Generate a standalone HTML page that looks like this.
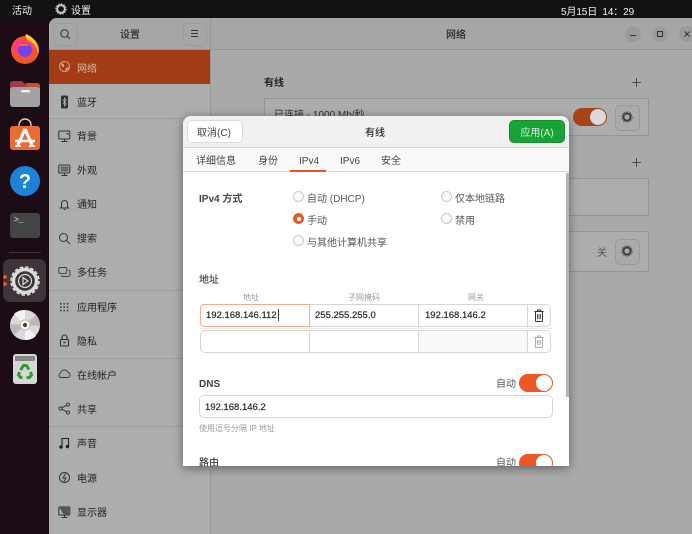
<!DOCTYPE html>
<html lang="zh"><head><meta charset="utf-8"><title>设置</title>
<style>
html,body{margin:0;padding:0;width:692px;height:534px;overflow:hidden;background:#1b0c16}
body{font-family:"Liberation Sans","Noto Sans CJK SC",sans-serif;position:relative;filter:blur(.3px)}
.a,.t,svg{position:absolute}
.t{white-space:nowrap;font-size:10px;line-height:14px;color:#2c2c2c;margin-top:3px}
.b{font-weight:700}
.c{transform:translateX(-50%)}
.g{color:#9c9c9c;font-size:8px;line-height:10px}
.s{color:#222;left:77px}
.n{font-size:9.5px;color:#2a2a2a;-webkit-text-stroke:.2px #2a2a2a}
.ln{position:absolute;background:#9d9d9d;height:1px}
.card{position:absolute;left:264px;width:383px;border:1px solid #959595;background:#adadad}
.gb{position:absolute;left:615px;width:23px;height:24px;border:1px solid #999;border-radius:5px;background:#aaa}
.r{position:absolute;width:9px;height:9px;border:1px solid #c9c9c9;border-radius:50%;background:#fafafa}
.in{position:absolute;box-sizing:border-box;background:#fff;border:1px solid #d6d6d6}
.tg{position:absolute;width:34px;height:18px;border-radius:9px;background:#ec5725}
.tg i{position:absolute;right:1px;top:1px;width:16px;height:16px;border-radius:50%;background:#fff}
.wb{position:absolute;width:16px;height:16px;border-radius:50%;background:#9b9b9b;top:26px}
</style></head><body>
<!-- top bar -->
<div class="a" style="left:0;top:0;width:692px;height:18px;background:#121212"></div>
<div class="t" style="left:12px;top:2px;color:#eee">活动</div>
<svg style="left:55px;top:3px" width="12" height="12" viewBox="0 0 12 12"><circle cx="6" cy="6" r="3.800" fill="none" stroke="#ccc" stroke-width="1.800"/><circle cx="6" cy="6" r="5.200" fill="none" stroke="#ccc" stroke-width="1.100" stroke-dasharray="1.400 1.300"/></svg>
<div class="t" style="left:71px;top:2px;color:#eee">设置</div>
<div class="t" style="left:561px;top:3px;color:#eee;letter-spacing:-.12px">5月15日&nbsp;&nbsp;14：29</div>

<!-- dock -->
<svg style="left:0;top:18px" width="49" height="516" viewBox="0 18 49 516">
<rect x="0" y="18" width="49" height="516" fill="#1b0c16"/>
<circle cx="25" cy="50" r="14" fill="#f0562c"/><path d="M12 50a13 13 0 0 1 8-12c-2 3 2 3 5 2 6 0 9 4 8 9-1 6-7 8-12 6-4-2-6-5-9-5z" fill="#ff3d74"/><path d="M27 36c3 1 9 4 11 11 1 3 1 5 0 7-1-8-5-11-9-13-2-1-3-3-2-5z" fill="#ffbb24"/><path d="M26 34c5 2 10 6 12 13-3-5-7-8-11-8-1-2-2-3-1-5z" fill="#ffd32e"/><circle cx="25" cy="50" r="7" fill="#7542e5"/><path d="M18 46c3-3 9-3 12 0-4-1-8 0-12 0z" fill="#ff7c2d"/>
<path d="M10 84q0-3 3-3h9l3 3h12q3 0 3 3v5H10z" fill="#a33a49"/><path d="M26 83h11q3 0 3 3v4H28z" fill="#c8522e"/><rect x="10" y="87" width="30" height="20" rx="3" fill="#a2a2a2"/><rect x="21" y="90" width="9" height="2.400" rx="1" fill="#f0f0f0"/>
<path d="M19 127v-2a6 6 0 0 1 12 0v2" fill="none" stroke="#e9cfa8" stroke-width="1.400"/><rect x="10" y="126" width="30" height="24" rx="3" fill="#ea6b34"/><path d="M25 129 18 145M25 129l7 16" stroke="#fff" stroke-width="3" fill="none"/><path d="M15 141h20" stroke="#fff" stroke-width="2.400"/><path d="M15 146h6M29 146h6" stroke="#fff" stroke-width="1.800"/>
<circle cx="25" cy="181" r="15" fill="#1c83d6"/><text x="25" y="188" font-family="Liberation Sans" font-size="20" font-weight="700" fill="#fff" text-anchor="middle">?</text>
<rect x="10" y="213" width="30" height="25" rx="3" fill="#444"/><text x="14" y="222" font-family="Liberation Mono" font-size="8" fill="#eee">&gt;_</text>
<rect x="9" y="252" width="32" height="1" fill="#3b3038"/>
<rect x="3" y="259" width="43" height="43" rx="7" fill="#3d353a"/>
<circle cx="5" cy="277" r="1.900" fill="#ed5a25"/><circle cx="5" cy="284" r="1.900" fill="#ed5a25"/>
<circle cx="25" cy="281" r="11.500" fill="none" stroke="#dcdcdc" stroke-width="3.400"/><circle cx="25" cy="281" r="14" fill="none" stroke="#dcdcdc" stroke-width="1.600" stroke-dasharray="3.500 2"/><circle cx="25" cy="281" r="6.500" fill="none" stroke="#dcdcdc" stroke-width="1.200"/><path d="M23 277.500l5 3.500-5 3.500z" fill="none" stroke="#dcdcdc" stroke-width="1.200"/>
<circle cx="25" cy="325" r="15" fill="#d9d9d9"/><path d="M25 325 14 314a15 15 0 0 1 11-4zM25 325l11 11a15 15 0 0 1-11 4z" fill="#f2f2f2"/><path d="M25 325l15 1a15 15 0 0 0-4-11zM25 325l-15-1a15 15 0 0 0 4 11z" fill="#b9b9b9"/><circle cx="25" cy="325" r="5" fill="#fff" stroke="#c9b48a"/><circle cx="25" cy="325" r="2.200" fill="#444"/>
<rect x="13" y="354" width="24" height="30" rx="3" fill="#d7d7d7"/><rect x="15" y="356" width="20" height="5" rx="1" fill="#868686"/>
<g fill="none" stroke="#2f9e2f" stroke-width="3"><path d="M20.500 370l3-4.500h3l2.500 4"/><path d="M30.500 372l1 3-2 2.500h-3"/><path d="M19.500 372l-1 3 2 2.500h2"/></g>
</svg>

<!-- settings window -->
<div class="a" style="left:49px;top:18px;width:643px;height:516px;background:#a9a9a9;border-top-left-radius:8px;overflow:hidden">
 <div class="a" style="left:0;top:0;width:161px;height:516px;background:#adadad"></div>
 <div class="a" style="left:0;top:0;width:643px;height:32px;background:#a6a6a6"></div>
 <div class="a" style="left:0;top:32px;width:161px;height:34px;background:#a33c16"></div>
 <div class="a" style="left:161px;top:0;width:1px;height:516px;background:#979797"></div>
 <div class="a" style="left:0;top:31px;width:643px;height:1px;background:#949494"></div>
</div>
<div class="ln" style="left:49px;top:118px;width:161px"></div>
<div class="ln" style="left:49px;top:290px;width:161px"></div>
<div class="ln" style="left:49px;top:358px;width:161px"></div>
<div class="ln" style="left:49px;top:426px;width:161px"></div>

<div class="a" style="left:53px;top:23px;width:23px;height:21px;border:1px solid #9c9c9c;border-radius:5px;background:#a6a6a6"></div>
<svg style="left:59px;top:28px" width="12" height="12" viewBox="0 0 12 12" fill="none" stroke="#333" stroke-width="1"><circle cx="5.500" cy="5.500" r="3.700"/><path d="M8.200 8.200 11 11"/></svg>
<div class="t c" style="left:130px;top:26px;font-weight:500">设置</div>
<div class="a" style="left:183px;top:23px;width:22px;height:21px;border:1px solid #9c9c9c;border-radius:5px;background:#a6a6a6"></div>
<svg style="left:189px;top:29px" width="11" height="10" viewBox="0 0 11 10" stroke="#333" stroke-width="1"><path d="M2 1.500h7M2 4.500h7M2 7.500h7"/></svg>

<!-- sidebar items -->
<svg style="left:58px;top:60px" width="13" height="13" viewBox="0 0 13 13"><circle cx="6.500" cy="6.500" r="5" fill="none" stroke="#d69a80" stroke-width="1.100"/><path d="M3 3l3 1 0 3-2 0zM7 9l3-2 1 1-3 3z" fill="#d69a80"/></svg>
<div class="t s" style="top:60px;color:#dfb7a5">网络</div>
<svg style="left:60px;top:95px" width="9" height="14" viewBox="0 0 9 14"><rect x="1" y="0.500" width="7" height="13" rx="1.500" fill="#333"/><path d="M2.800 4.500l3.400 4.500-1.700 2V3l1.700 2-3.400 4" fill="none" stroke="#bbb" stroke-width=".7"/></svg>
<div class="t s" style="top:94px">蓝牙</div>
<svg style="left:58px;top:130px" width="13" height="13" viewBox="0 0 13 13" fill="none" stroke="#333" stroke-width="1"><rect x=".8" y="1" width="11" height="8" rx="1"/><path d="M6.500 9v2M3.500 11.500h6"/><path d="M8 3h2.500v2.500z" fill="#333" stroke="none"/></svg>
<div class="t s" style="top:128px">背景</div>
<svg style="left:58px;top:164px" width="13" height="13" viewBox="0 0 13 13" fill="none" stroke="#333" stroke-width="1"><rect x=".8" y="1" width="11" height="8" rx="1"/><path d="M2.500 3.200h8M2.500 5h8M2.500 6.800h8" stroke-width=".9"/><path d="M6.500 9v2M3.500 11.500h6"/></svg>
<div class="t s" style="top:162px">外观</div>
<svg style="left:58px;top:198px" width="13" height="13" viewBox="0 0 13 13" fill="none" stroke="#333" stroke-width="1"><path d="M3.500 9V5.500a3 3 0 0 1 6 0V9l1 1h-8zM5.500 11.500h2"/></svg>
<div class="t s" style="top:196px">通知</div>
<svg style="left:58px;top:232px" width="13" height="13" viewBox="0 0 13 13" fill="none" stroke="#333" stroke-width="1"><circle cx="5.500" cy="5.500" r="4"/><path d="M8.500 8.500 12 12"/></svg>
<div class="t s" style="top:230px">搜索</div>
<svg style="left:58px;top:266px" width="13" height="13" viewBox="0 0 13 13" fill="none" stroke="#444" stroke-width="1"><rect x=".8" y="1.500" width="8" height="6" rx="1.500"/><path d="M10.500 4a1.500 1.500 0 0 1 1.500 1.500v3a2 2 0 0 1-2 2H5a1.500 1.500 0 0 1-1.500-1.500"/></svg>
<div class="t s" style="top:264px">多任务</div>
<svg style="left:60px;top:303px" width="9" height="9" viewBox="0 0 9 9" fill="#444"><path d="M0 0h1.600v1.600H0zM3.400 0H5v1.600H3.400zM6.800 0h1.600v1.600H6.800zM0 3.400h1.600V5H0zM3.400 3.400H5V5H3.400zM6.800 3.400h1.600V5H6.800zM0 6.800h1.600v1.600H0zM3.400 6.800H5v1.600H3.400zM6.800 6.800h1.600v1.600H6.800z"/></svg>
<div class="t s" style="top:299px">应用程序</div>
<svg style="left:59px;top:334px" width="11" height="13" viewBox="0 0 11 13" fill="none" stroke="#333" stroke-width="1.100"><rect x="1.500" y="5.500" width="8" height="6.500" rx="1"/><path d="M3 5.500V3.500a2.500 2.500 0 0 1 5 0v2"/><path d="M4.500 8.500h2" stroke-width="1.500"/></svg>
<div class="t s" style="top:333px">隐私</div>
<svg style="left:58px;top:368px" width="13" height="12" viewBox="0 0 13 12" fill="none" stroke="#333" stroke-width=".9"><path d="M3 9.500a2.300 2.300 0 0 1-.3-4.500 3.600 3.600 0 0 1 7-.6 2.600 2.600 0 0 1 .3 5.100z"/></svg>
<div class="t s" style="top:367px">在线帐户</div>
<svg style="left:58px;top:402px" width="13" height="13" viewBox="0 0 13 13" fill="none" stroke="#333" stroke-width=".9"><circle cx="2.500" cy="6.500" r="1.600"/><circle cx="10" cy="2.500" r="1.600"/><circle cx="10" cy="10.500" r="1.600"/><path d="M4 5.700 8.500 3.300M4 7.300l4.500 2.400"/></svg>
<div class="t s" style="top:401px">共享</div>
<svg style="left:59px;top:437px" width="11" height="12" viewBox="0 0 11 12" fill="none" stroke="#222" stroke-width="1.100"><path d="M3 9.500V1.500h6.500v8"/><circle cx="2" cy="10" r="1.200" fill="#222"/><circle cx="8.500" cy="9.500" r="1.200" fill="#222"/></svg>
<div class="t s" style="top:435px">声音</div>
<svg style="left:58px;top:471px" width="13" height="13" viewBox="0 0 13 13" fill="none" stroke="#333" stroke-width="1"><circle cx="6.500" cy="6.500" r="5"/><path d="M7.500 2.500 5 7h3l-2 3.500"/></svg>
<div class="t s" style="top:470px">电源</div>
<svg style="left:58px;top:506px" width="13" height="13" viewBox="0 0 13 13" fill="none" stroke="#333" stroke-width="1"><rect x=".8" y="1" width="11" height="8" rx=".5"/><path d="M1 1l5 8h5V1z" fill="#555" stroke="none"/><path d="M6.500 9v2M3.500 11.500h6"/></svg>
<div class="t s" style="top:504px">显示器</div>

<!-- main panel -->
<div class="t c" style="left:456px;top:26px;color:#262626;font-weight:500">网络</div>
<div class="wb" style="left:625px"></div><div class="wb" style="left:652px"></div><div class="wb" style="left:679px"></div>
<svg style="left:625px;top:26px" width="67" height="16" viewBox="0 0 67 16" fill="none" stroke="#333"><path d="M5 9.500h6"/><rect x="32.500" y="5.500" width="5" height="5"/><path d="M59.500 5.500l5 5M64.500 5.500l-5 5"/></svg>
<div class="t b" style="left:264px;top:74px;color:#262626">有线</div>
<svg style="left:631px;top:77px" width="11" height="11" viewBox="0 0 11 11" stroke="#333" stroke-width=".8"><path d="M5.500 1v9M1 5.500h9"/></svg>
<svg style="left:631px;top:157px" width="11" height="11" viewBox="0 0 11 11" stroke="#333" stroke-width=".8"><path d="M5.500 1v9M1 5.500h9"/></svg>
<div class="card" style="top:98px;height:36px"></div>
<div class="card" style="top:178px;height:36px"></div>
<div class="card" style="top:231px;height:39px"></div>
<div class="t" style="left:274px;top:106px;color:#333">已连接 - 1000 Mb/秒</div>
<div class="tg" style="left:573px;top:108px;background:#a8431a"><i style="background:#d9d9d9"></i></div>
<div class="gb" style="top:105px"></div><div class="gb" style="top:239px"></div>
<svg style="left:621px;top:111px" width="12" height="12" viewBox="0 0 12 12" fill="none" stroke="#3a3a3a"><circle cx="6" cy="6" r="3.500" stroke-width="1.700"/><circle cx="6" cy="6" r="5" stroke-width="1.200" stroke-dasharray="1.300 1.300"/></svg>
<svg style="left:621px;top:245px" width="12" height="12" viewBox="0 0 12 12" fill="none" stroke="#3a3a3a"><circle cx="6" cy="6" r="3.500" stroke-width="1.700"/><circle cx="6" cy="6" r="5" stroke-width="1.200" stroke-dasharray="1.300 1.300"/></svg>
<div class="t" style="left:597px;top:244px;color:#555">关</div>

<!-- dialog -->
<div class="a" style="left:183px;top:116px;width:386px;height:350px;background:#fff;border-radius:8px 8px 0 0;box-shadow:0 2px 10px rgba(0,0,0,.45);overflow:hidden">
 <div class="a" style="left:0;top:0;width:386px;height:31px;background:#f1f1f1;border-bottom:1px solid #d6d6d6"></div>
 <div class="a" style="left:0;top:32px;width:386px;height:23px;background:#f9f9f9;border-bottom:1px solid #d6d6d6"></div>
 <div class="a" style="left:107px;top:54px;width:36px;height:2px;background:#e9541f"></div>
 <div class="a" style="left:383px;top:57px;width:3px;height:224px;background:#b4b4b4"></div>
 <div class="a" style="left:4px;top:4px;width:54px;height:21px;background:#fff;border:1px solid #d9d9d9;border-radius:5px"></div>
 <div class="a" style="left:326px;top:4px;width:54px;height:21px;background:#17a336;border:1px solid #158e30;border-radius:5px"></div>
</div>
<div class="t c" style="left:214px;top:124px;color:#444">取消(C)</div>
<div class="t c" style="left:375px;top:124px;color:#2c2c2c;font-weight:500">有线</div>
<div class="t c" style="left:537px;top:124px;color:#d5efd9">应用(A)</div>
<div class="t" style="left:196px;top:152px;color:#444">详细信息</div>
<div class="t" style="left:258px;top:152px;color:#444">身份</div>
<div class="t" style="left:299px;top:152px;color:#444">IPv4</div>
<div class="t" style="left:340px;top:152px;color:#444">IPv6</div>
<div class="t" style="left:381px;top:152px;color:#444">安全</div>

<div class="t b" style="left:199px;top:190px;color:#444">IPv4 方式</div>
<div class="r" style="left:293px;top:191px"></div>
<div class="t" style="left:307px;top:190px;color:#555">自动 (DHCP)</div>
<div class="r" style="left:293px;top:213px;background:#ed5a25;border-color:#ed5a25"></div>
<div class="a" style="left:296.500px;top:216.500px;width:4px;height:4px;border-radius:50%;background:#fff"></div>
<div class="t" style="left:307px;top:212px;color:#555">手动</div>
<div class="r" style="left:293px;top:235px"></div>
<div class="t" style="left:307px;top:234px;color:#555">与其他计算机共享</div>
<div class="r" style="left:441px;top:191px"></div>
<div class="t" style="left:455px;top:190px;color:#555">仅本地链路</div>
<div class="r" style="left:441px;top:213px"></div>
<div class="t" style="left:455px;top:212px;color:#555">禁用</div>

<div class="t" style="left:199px;top:271px;color:#444;font-weight:500">地址</div>
<div class="t g c" style="left:251px;top:290px">地址</div>
<div class="t g c" style="left:364px;top:290px">子网掩码</div>
<div class="t g c" style="left:476px;top:290px">网关</div>

<div class="a" style="left:199px;top:328px;width:353px;height:1px;background:#ececec"></div>
<div class="in" style="left:200px;top:304px;width:351px;height:23px;border-radius:5px"></div>
<div class="in" style="left:200px;top:330px;width:351px;height:23px;border-radius:5px"></div>
<div class="a" style="left:309px;top:305px;width:1px;height:22px;background:#d6d6d6"></div>
<div class="a" style="left:418px;top:305px;width:1px;height:22px;background:#d6d6d6"></div>
<div class="a" style="left:527px;top:305px;width:1px;height:22px;background:#d6d6d6"></div>
<div class="a" style="left:309px;top:331px;width:1px;height:22px;background:#d6d6d6"></div>
<div class="a" style="left:418px;top:331px;width:108px;height:21px;background:#fafafa;border-left:1px solid #d6d6d6;border-right:1px solid #d6d6d6"></div>
<div class="a" style="left:200px;top:304px;width:108px;height:21px;border:1px solid #f6a98c;border-radius:4px 0 0 4px;background:#fff"></div>
<div class="t n" style="left:206px;top:306px">192.168.146.112</div>
<div class="a" style="left:278px;top:309px;width:1px;height:12px;background:#444"></div>
<div class="t n" style="left:315px;top:306px">255.255.255.0</div>
<div class="t n" style="left:425px;top:306px">192.168.146.2</div>
<svg style="left:533px;top:309px" width="12" height="13" viewBox="0 0 12 13" fill="none" stroke="#333" stroke-width="1"><path d="M1.500 2.500h9M4.500 2.500v-1.500h3v1.500"/><path d="M2.500 3v8.500q0 1 1 1h5q1 0 1-1V3"/><path d="M4.500 5v5M6 5v5M7.500 5v5" stroke-width=".8"/></svg>
<svg style="left:533px;top:335px" width="12" height="13" viewBox="0 0 12 13" fill="none" stroke="#aaa" stroke-width="1"><path d="M1.500 2.500h9M4.500 2.500v-1.500h3v1.500"/><path d="M2.500 3v8.500q0 1 1 1h5q1 0 1-1V3"/><path d="M4.500 5v5M6 5v5M7.500 5v5" stroke-width=".8"/></svg>

<div class="t b" style="left:199px;top:375px;color:#444">DNS</div>
<div class="t" style="left:496px;top:375px;color:#555">自动</div>
<div class="tg" style="left:519px;top:374px"><i></i></div>
<div class="in" style="left:199px;top:395px;width:354px;height:23px;border-radius:5px"></div>
<div class="t n" style="left:205px;top:398px">192.168.146.2</div>
<div class="t g" style="left:199px;top:421px">使用逗号分隔 IP 地址</div>

<div class="a" style="left:183px;top:440px;width:383px;height:26px;overflow:hidden">
 <div class="t" style="left:16px;top:14px;color:#444;font-weight:500">路由</div>
 <div class="t" style="left:313px;top:14px;color:#555">自动</div>
 <div class="tg" style="left:336px;top:14px"><i></i></div>
</div>
</body></html>
